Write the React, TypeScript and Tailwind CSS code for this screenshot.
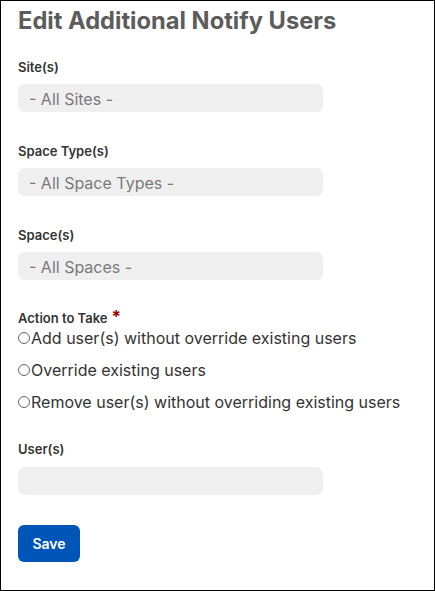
import React from "react";

const fieldLabel = "text-[13px] leading-[20px] font-semibold text-[#333333]";

const SelectBox = ({ placeholder }: { placeholder?: string }) => (
  <div className="w-[305px] h-[28px] rounded-[7px] bg-[#efefef] pl-[11px] pt-[1px] flex items-center text-[16px] text-[#7a7a7a]">
    {placeholder}
  </div>
);

const Radio = ({ text }: { text: string }) => (
  <label className="flex items-center h-[20px] text-[16px] text-[#333333]">
    <span className="inline-block w-[12px] h-[12px] rounded-full border border-[#666666] bg-white mr-[1px]" />
    {text}
  </label>
);

const App = () => {
  return (
    <div
      className="w-[435px] h-[591px] border border-black bg-white pl-[17px] pt-[4px]"
      style={{ fontFamily: "Inter, 'Noto Sans', sans-serif" }}
    >
      <h1 className="text-[23.7px] leading-[32px] font-bold text-[#5c5c5c]">
        Edit Additional Notify Users
      </h1>

      <div className="mt-[20px] flex flex-col">
        <div className={fieldLabel}>Site(s)</div>
        <div className="mt-[7px]">
          <SelectBox placeholder="- All Sites -" />
        </div>

        <div className={`${fieldLabel} mt-[29px]`}>Space Type(s)</div>
        <div className="mt-[7px]">
          <SelectBox placeholder="- All Space Types -" />
        </div>

        <div className={`${fieldLabel} mt-[29px]`}>Space(s)</div>
        <div className="mt-[7px]">
          <SelectBox placeholder="- All Spaces -" />
        </div>

        <div className={`${fieldLabel} mt-[28px] flex items-start`}>
          Action to Take
          <span className="ml-[4px] text-[17px] leading-[18px] font-bold text-[#9b0000]">*</span>
        </div>
        <div className="flex flex-col gap-[12px]">
          <Radio text="Add user(s) without override existing users" />
          <Radio text="Override existing users" />
          <Radio text="Remove user(s) without overriding existing users" />
        </div>

        <div className={`${fieldLabel} mt-[27px]`}>User(s)</div>
        <div className="mt-[8px]">
          <SelectBox />
        </div>

        <div className="mt-[30px]">
          <button className="w-[62px] h-[37px] rounded-[6px] bg-[#0055b8] text-white text-[14px] font-semibold">
            Save
          </button>
        </div>
      </div>
    </div>
  );
};

export default App;
